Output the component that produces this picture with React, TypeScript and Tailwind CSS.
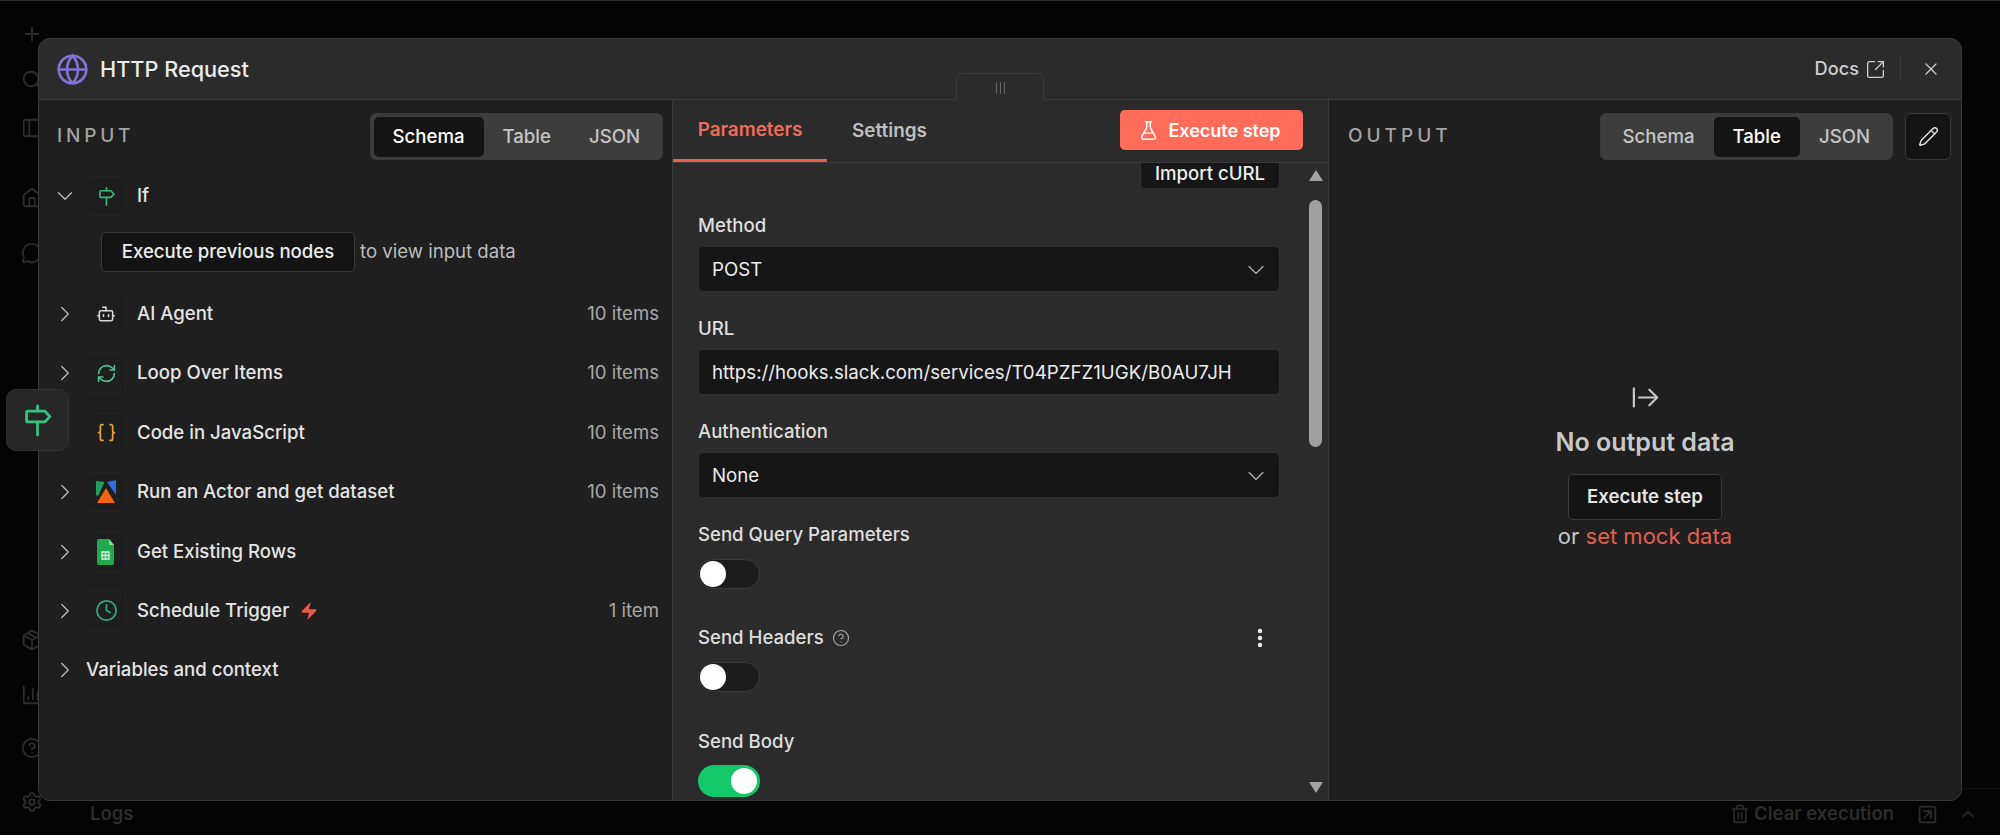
import React from 'react';
import {
  ArrowRightFromLine,
  BarChart3,
  Bot,
  Braces,
  ChevronDown,
  ChevronRight,
  ChevronUp,
  CircleHelp,
  Clock,
  EllipsisVertical,
  FlaskConical,
  Globe,
  House,
  MessageCircle,
  Package,
  PanelLeft,
  Pencil,
  Plus,
  RefreshCw,
  Search,
  Settings,
  SquareArrowOutUpRight,
  SquareArrowUpRight,
  Trash2,
  X,
  Zap,
} from 'lucide-react';

const SignIcon: React.FC<{ size: number; className?: string; strokeWidth?: number }> = ({ size, className, strokeWidth = 2 }) => (
  <svg width={size} height={size} viewBox="0 0 24 24" fill="none" stroke="currentColor" strokeWidth={strokeWidth} strokeLinecap="round" strokeLinejoin="round" className={className}>
    <path d="M12 2v3.5" />
    <path d="M12 13v9" />
    <path d="M5.5 5.5H17l3.5 3.8L17 13H5.5a1 1 0 0 1-1-1V6.5a1 1 0 0 1 1-1z" />
  </svg>
);

const ApifyLogo = () => (
  <svg width="24" height="26" viewBox="0 0 24 26">
    <path d="M2 2 L10.5 3 L4 17 L2 16 Z" fill="#1fa35c" />
    <path d="M13 3 L22 1 L22 16 Z" fill="#2f6fe0" />
    <path d="M12 9 L21 24 L3 24 Z" fill="#f2640f" />
  </svg>
);

const SheetsLogo = () => (
  <svg width="24" height="28" viewBox="0 0 24 28">
    <path d="M5 1 H15 L20 7 V25 a2 2 0 0 1-2 2 H5 a2 2 0 0 1-2-2 V3 a2 2 0 0 1 2-2 Z" fill="#23a94d" />
    <path d="M15 1 L20 7 H15 Z" fill="#8ed6a5" />
    <path d="M8 14 H15 V21 H8 Z M11.5 14 V21 M8 17.5 H15" fill="none" stroke="#d8f2e0" strokeWidth="1.3" />
  </svg>
);

const ViewTabs: React.FC<{ active: string }> = ({ active }) => (
  <div className="flex h-[47px] items-center rounded-[6px] border border-[#3a3a3a] bg-[#3d3d3d] px-[3px]">
    {['Schema', 'Table', 'JSON'].map(tab => (
      <div
        key={tab}
        className={
          tab === active
            ? 'flex h-[40px] items-center rounded-[5px] bg-[#141414] px-[19px] text-[18.6px] font-medium text-white'
            : 'flex h-[40px] items-center px-[19px] text-[18.6px] font-medium text-[#c4c4c4]'
        }
      >
        {tab}
      </div>
    ))}
  </div>
);

const Caret: React.FC<{ open?: boolean }> = ({ open }) => (
  <div className="-ml-[1px] flex w-[18px] shrink-0 items-center justify-center">
    {open ? (
      <ChevronDown size={26} strokeWidth={1.2} className="shrink-0 text-[#bdbdbd]" />
    ) : (
      <ChevronRight size={26} strokeWidth={1.2} className="shrink-0 text-[#bdbdbd]" />
    )}
  </div>
);

const NodeRow: React.FC<{
  icon: React.ReactNode;
  name: string;
  items?: string;
  open?: boolean;
  trigger?: boolean;
}> = ({ icon, name, items, open, trigger }) => (
  <div className="flex h-[48px] items-center pr-[4px]">
    <Caret open={open} />
    <div className="ml-[12px] flex h-[40px] w-[40px] shrink-0 items-center justify-center rounded-[5px] border border-[#242424] bg-[#1e1e1e]">
      {icon}
    </div>
    <span className="ml-[11px] text-[18.6px] font-medium text-[#e4e4e4]">{name}</span>
    {trigger && <Zap size={20} fill="#e8584a" strokeWidth={0} className="ml-[10px]" />}
    {items && <span className="ml-auto text-[18.6px] text-[#a8a8a8]">{items}</span>}
  </div>
);

const Field: React.FC<{ label: string; value: string; select?: boolean }> = ({ label, value, select }) => (
  <>
    <div className="mt-[24px] h-[24px] text-[18.6px] font-medium leading-[24px] text-[#dedede]">{label}</div>
    <div className="mt-[9px] flex h-[46px] w-[582px] items-center justify-between rounded-[5px] border border-[#303030] bg-[#161616] pl-[13px] pr-[9px] pt-[2px] text-[18.7px] text-[#ececec]">
      <span className="w-[530px] overflow-hidden whitespace-nowrap">{value}</span>
      {select && <ChevronDown size={28} strokeWidth={1} className="text-[#b8b8b8]" />}
    </div>
  </>
);

const Toggle: React.FC<{ on?: boolean; gap?: string }> = ({ on, gap = 'mt-[12px]' }) => (
  <div
    className={
      on
        ? `${gap} flex h-[32px] w-[62px] items-center justify-end rounded-full bg-[#13c868] pr-[3px]`
        : `${gap} flex h-[30px] w-[62px] items-center rounded-full border border-[#3a3a3a] bg-[#1c1c1c] pl-[1px]`
    }
  >
    <div className="h-[26px] w-[26px] rounded-full bg-white" />
  </div>
);

const App: React.FC = () => {
  return (
    <div className="relative flex h-screen w-full overflow-hidden border-t border-[#2e2e2e] bg-[#040404] font-['Inter',sans-serif]">
      {/* dimmed canvas behind the modal */}
      <div className="flex w-[64px] shrink-0 flex-col items-center text-[#2c2c2c]">
        <Plus size={22} className="mt-[22px]" />
        <Search size={22} className="mt-[24px]" />
        <PanelLeft size={22} className="mt-[26px]" />
        <House size={22} className="mt-[48px]" />
        <MessageCircle size={22} className="mt-[33px]" />
        <Package size={22} className="mt-auto" />
        <BarChart3 size={22} className="mt-[33px]" />
        <CircleHelp size={22} className="mt-[31px]" />
        <Settings size={22} className="mb-[22px] mt-[32px]" />
      </div>
      <div className="flex flex-1 flex-col justify-end">
        <div className="flex h-[47px] items-center border-t border-[#101010] pl-[26px] pr-[22px] pt-[4px] text-[#2c2c2c]">
          <span className="text-[18.5px] font-semibold">Logs</span>
          <Trash2 size={20} className="ml-auto" />
          <span className="ml-[4px] text-[18.5px] font-semibold">Clear execution</span>
          <SquareArrowUpRight size={21} className="ml-[23px]" />
          <ChevronUp size={20} className="ml-[20px]" />
        </div>
      </div>

      {/* modal */}
      <div className="absolute left-[38px] top-[37px] flex h-[763px] w-[1924px] flex-col overflow-hidden rounded-[12px] border border-[#3b3b3b] bg-[#2b2b2b]">
        <div className="flex h-[61px] shrink-0 items-center border-b border-[#3a3a3a] pl-[17px] pr-[20px]">
          <Globe size={33} strokeWidth={1.9} className="text-[#8273db]" />
          <span className="ml-[11px] text-[21.7px] font-medium text-[#ececec]">HTTP Request</span>
          <span className="ml-auto text-[18.2px] font-medium text-[#cfcfcf]">Docs</span>
          <SquareArrowOutUpRight size={21} strokeWidth={1.5} className="ml-[6px] text-[#cfcfcf]" />
          <div className="ml-[14px] h-[24px] w-px bg-[#3d3d3d]" />
          <X size={20} strokeWidth={1.5} className="ml-[20px] text-[#cfcfcf]" />
        </div>

        <div className="flex min-h-0 flex-1">
          {/* input */}
          <div className="w-[633px] shrink-0 bg-[#1f1f1f] pl-[18px] pr-[9px] pt-[13px]">
            <div className="flex items-center justify-between">
              <span className="text-[19px] font-medium tracking-[0.2em] text-[#a3a3a3]">INPUT</span>
              <ViewTabs active="Schema" />
            </div>
            <div className="mt-[12px]">
              <NodeRow open name="If" icon={<SignIcon size={21} strokeWidth={1.8} className="text-[#3cb878]" />} />
              <div className="ml-[44px] mt-[12px] flex items-center">
                <div className="flex h-[40px] w-[254px] items-center justify-center rounded-[5px] border border-[#3a3a3a] bg-[#141414] text-[18.6px] font-medium text-[#ececec]">
                  Execute previous nodes
                </div>
                <span className="ml-[5px] text-[18.6px] text-[#bdbdbd]">to view input data</span>
              </div>
            </div>
            <div className="mt-[18px] flex flex-col gap-[11.4px]">
              <NodeRow name="AI Agent" items="10 items" icon={<Bot size={20} strokeWidth={1.8} className="text-[#d8d8d8]" />} />
              <NodeRow name="Loop Over Items" items="10 items" icon={<RefreshCw size={21} strokeWidth={1.9} className="text-[#52bd94]" />} />
              <NodeRow name="Code in JavaScript" items="10 items" icon={<Braces size={21} strokeWidth={2} className="text-[#e8a03a]" />} />
              <NodeRow name="Run an Actor and get dataset" items="10 items" icon={<ApifyLogo />} />
              <NodeRow name="Get Existing Rows" icon={<SheetsLogo />} />
              <NodeRow name="Schedule Trigger" trigger items="1 item" icon={<Clock size={23} strokeWidth={1.8} className="text-[#31a884]" />} />
              <div className="flex h-[48px] items-center">
                <Caret />
                <span className="ml-[12px] text-[18.6px] font-medium text-[#e4e4e4]">Variables and context</span>
              </div>
            </div>
          </div>

          {/* parameters */}
          <div className="flex w-[657px] shrink-0 flex-col border-x border-[#3a3a3a] bg-[#2b2b2b]">
            <div className="relative flex h-[63px] shrink-0 items-start border-b border-[#3a3a3a]">
              <div className="flex h-[62px] w-[154px] items-center justify-center border-b-[3px] border-[#e8604e] pt-[2px] text-[18.9px] font-semibold text-[#ee6c5b]">
                Parameters
              </div>
              <div className="ml-[25px] flex h-[60px] items-center pt-[2px] text-[18.9px] font-semibold text-[#bfbfbf]">Settings</div>
              <div className="ml-auto mr-[25px] mt-[10px] flex h-[40px] w-[183px] items-center justify-center rounded-[5px] bg-[#ff6d5a] pr-[4px] text-[18px] font-semibold text-white">
                <FlaskConical size={21} strokeWidth={1.7} className="mr-[9px]" />
                Execute step
              </div>
            </div>
            <div className="flex min-h-0 flex-1 overflow-hidden">
              <div className="w-[605px] shrink-0 pl-[25px]">
                <div className="flex w-[582px] justify-end">
                  <div className="flex h-[26px] w-[140px] items-center justify-center rounded-b-[5px] border-x border-b border-[#303030] bg-[#161616] pb-[3px] text-[18.6px] font-medium text-[#ececec]">
                    Import cURL
                  </div>
                </div>
                <Field label="Method" value="POST" select />
                <Field label="URL" value="https://hooks.slack.com/services/T04PZFZ1UGK/B0AU7JH" />
                <Field label="Authentication" value="None" select />
                <div className="mt-[24px] h-[24px] text-[18.6px] font-medium leading-[24px] text-[#dedede]">Send Query Parameters</div>
                <Toggle gap="mt-[13px]" />
                <div className="mt-[37px] flex h-[24px] w-[580px] items-center text-[18.6px] font-medium text-[#dedede]">
                  Send Headers
                  <CircleHelp size={18} strokeWidth={1.5} className="ml-[8px] text-[#a8a8a8]" />
                  <EllipsisVertical size={24} strokeWidth={2.4} className="ml-auto mr-[6px] text-[#ececec]" />
                </div>
                <Toggle />
                <div className="mt-[37px] h-[24px] text-[18.6px] font-medium leading-[24px] text-[#dedede]">Send Body</div>
                <Toggle on />
              </div>
              {/* scrollbar */}
              <div className="flex w-[50px] flex-col items-end pr-[6px]">
                <div className="-mr-[1px] mt-[7px] h-0 w-0 border-x-[7px] border-b-[11px] border-x-transparent border-b-[#a3a3a3]" />
                <div className="mt-[19px] h-[247px] w-[13px] rounded-full bg-[#a0a0a0]" />
                <div className="-mr-[1px] mt-[335px] h-0 w-0 border-x-[7px] border-t-[11px] border-x-transparent border-t-[#a3a3a3]" />
              </div>
            </div>
          </div>

          {/* output */}
          <div className="flex min-w-0 flex-1 flex-col bg-[#1f1f1f] pl-[19px] pr-[10px] pt-[13px]">
            <div className="flex items-center">
              <span className="text-[19px] font-medium tracking-[0.21em] text-[#a3a3a3]">OUTPUT</span>
              <div className="ml-auto">
                <ViewTabs active="Table" />
              </div>
              <div className="ml-[12px] flex h-[47px] w-[46px] items-center justify-center rounded-[6px] border border-[#3a3a3a] bg-[#141414]">
                <Pencil size={21} strokeWidth={1.6} className="text-[#e8e8e8]" />
              </div>
            </div>
            <div className="mt-[222px] flex flex-col items-center pr-[9px]">
              <ArrowRightFromLine size={31} strokeWidth={1.7} className="text-[#c8c8c8]" />
              <div className="mt-[11px] text-[25px] font-semibold text-[#c8c8c8]">No output data</div>
              <div className="mt-[12px] flex h-[46px] w-[154px] items-center justify-center rounded-[5px] border border-[#3a3a3a] bg-[#141414] text-[18.6px] font-semibold text-[#e4e4e4]">
                Execute step
              </div>
              <div className="mt-[2px] text-[22px] leading-[28px] text-[#c8c8c8]">
                or <span className="text-[#e0604f]">set mock data</span>
              </div>
            </div>
          </div>
        </div>
      </div>

      {/* grip tab on top of the panel edge */}
      <div className="absolute left-[956px] top-[72px] flex h-[28px] w-[88px] items-center justify-center gap-[3px] rounded-t-[6px] border-x border-t border-[#3a3a3a] bg-[#2b2b2b]">
        <div className="h-[12px] w-px bg-[#666666]" />
        <div className="h-[12px] w-px bg-[#666666]" />
        <div className="h-[12px] w-px bg-[#666666]" />
      </div>

      {/* selected node in the rail, over the modal edge */}
      <div className="absolute left-[6px] top-[388px] flex h-[62px] w-[63px] items-center justify-center rounded-[10px] border border-[#333333] bg-[#262626]">
        <SignIcon size={35} strokeWidth={1.9} className="text-[#36c27f]" />
      </div>
    </div>
  );
};

export default App;
